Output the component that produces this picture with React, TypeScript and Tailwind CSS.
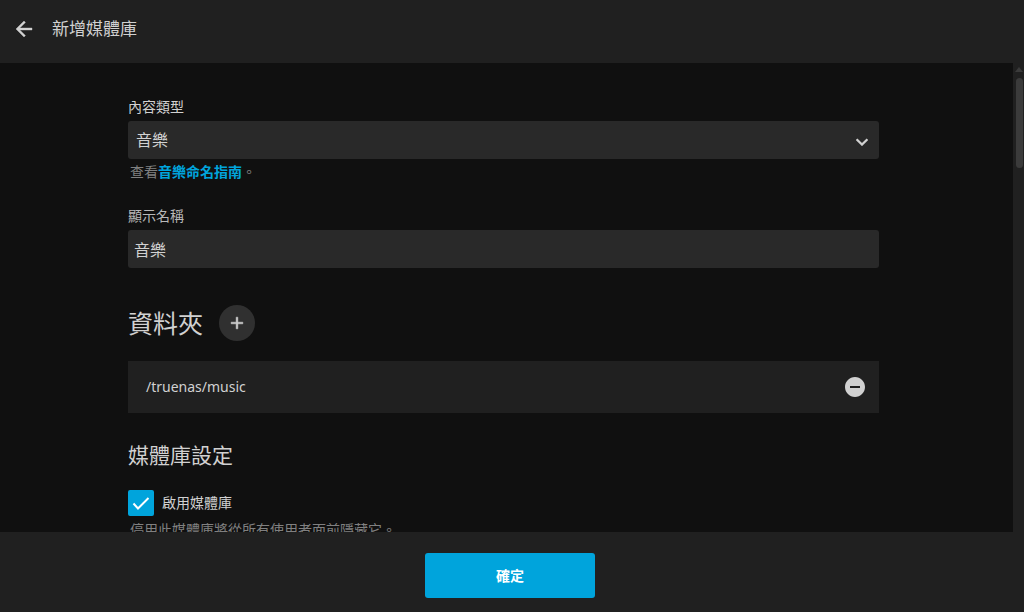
import React, { useState } from 'react';

const ArrowBackIcon: React.FC = () => (
  <svg viewBox="0 0 24 24" className="h-6 w-6" fill="currentColor" stroke="currentColor" strokeWidth="0.4" aria-hidden="true">
    <path d="M20 11H7.83l5.59-5.59L12 4l-8 8 8 8 1.41-1.41L7.83 13H20v-2z" />
  </svg>
);

const AddIcon: React.FC = () => (
  <svg viewBox="0 0 24 24" className="h-5 w-5" fill="currentColor" stroke="currentColor" strokeWidth="0.6" aria-hidden="true">
    <path d="M19 13h-6v6h-2v-6H5v-2h6V5h2v6h6v2z" />
  </svg>
);

const RemoveCircleIcon: React.FC = () => (
  <svg viewBox="0 0 24 24" className="h-6 w-6" fill="currentColor" aria-hidden="true">
    <path d="M12 2C6.48 2 2 6.48 2 12s4.48 10 10 10 10-4.48 10-10S17.52 2 12 2zm5 11H7v-2h10v2z" />
  </svg>
);

const ExpandIcon: React.FC = () => (
  <svg
    viewBox="0 0 12 8"
    className="pointer-events-none absolute top-[17px] right-[11px] h-2 w-3"
    fill="none"
    stroke="currentColor"
    strokeWidth="2.2"
    aria-hidden="true"
  >
    <path d="M0.6 1.2 6 6.6l5.4-5.4" />
  </svg>
);

const CheckIcon: React.FC = () => (
  <svg
    viewBox="0 0 26 26"
    className="pointer-events-none absolute inset-0 h-[26px] w-[26px] text-white"
    fill="none"
    stroke="currentColor"
    strokeWidth="2"
    aria-hidden="true"
  >
    <path d="M5.5 13.5 10 18.5 20.5 8" />
  </svg>
);

const ScrollTrack: React.FC = () => (
  <div className="flex w-[11px] shrink-0 flex-col items-end bg-[#202020] pt-1" aria-hidden="true">
    <svg viewBox="0 0 8 5" className="mr-px h-[5px] w-2 text-[#3b3b3b]" fill="currentColor">
      <path d="M4 0l4 5H0z" />
    </svg>
    <div className="mt-[6px] mr-px h-[90px] w-[7px] rounded-full bg-[#3b3b3b]" />
  </div>
);

const App: React.FC = () => {
  const [contentType, setContentType] = useState('music');
  const [name, setName] = useState('音樂');
  const [folders, setFolders] = useState(['/truenas/music']);
  const [enabled, setEnabled] = useState(true);

  return (
    <div className="flex h-screen flex-col bg-[#202020] font-['Noto_Sans','Noto_Sans_CJK_TC',sans-serif] text-sm text-[#d1d1d1]">
      <header className="flex shrink-0 items-center px-3 pt-[17px] pb-[22px]">
        <button type="button" aria-label="返回">
          <ArrowBackIcon />
        </button>
        <h1 className="ml-4 text-[17px] leading-6">新增媒體庫</h1>
      </header>

      <div className="flex min-h-0 flex-1">
        <main className="min-w-0 flex-1 overflow-y-auto bg-[#101010] pt-[34px] pr-[134px] pb-8 pl-32 [scrollbar-width:none]">
          <div>
            <label htmlFor="content-type" className="block leading-5">
              內容類型
            </label>
            <div className="relative mt-1">
              <select
                id="content-type"
                value={contentType}
                onChange={(e) => setContentType(e.target.value)}
                className="block h-[38px] w-full appearance-none rounded-[3px] bg-[#292929] px-2 text-base"
              >
                <option value="music">音樂</option>
                <option value="movies">電影</option>
                <option value="tvshows">節目</option>
              </select>
              <ExpandIcon />
            </div>
            <p className="mt-[3px] pl-[2px] leading-5 text-[#808080]">
              查看
              <a href="#" className="font-bold text-[#00a4dc]">
                音樂命名指南
              </a>
              。
            </p>
          </div>

          <div className="mt-6">
            <label htmlFor="display-name" className="block leading-5 text-[#b8b8b8]">
              顯示名稱
            </label>
            <input
              id="display-name"
              type="text"
              value={name}
              onChange={(e) => setName(e.target.value)}
              className="mt-1 block h-[38px] w-full rounded-[3px] bg-[#292929] px-[6px] text-base"
            />
          </div>

          <section>
            <div className="mt-[37px] flex items-center">
              <h2 className="text-[25px] leading-9">資料夾</h2>
              <button
                type="button"
                aria-label="新增"
                onClick={() => setFolders([...folders, '/truenas'])}
                className="ml-4 flex h-9 w-9 items-center justify-center rounded-full bg-[#303030]"
              >
                <AddIcon />
              </button>
            </div>
            <ul className="mt-5">
              {folders.map((folder, index) => (
                <li key={index} className="flex h-[52px] items-center justify-between bg-[#202020] pr-3 pl-[18px]">
                  <span>{folder}</span>
                  <button
                    type="button"
                    aria-label="移除"
                    onClick={() => setFolders(folders.filter((_, i) => i !== index))}
                  >
                    <RemoveCircleIcon />
                  </button>
                </li>
              ))}
            </ul>
          </section>

          <section>
            <h2 className="mt-6 text-[21px] leading-9">媒體庫設定</h2>
            <div className="mt-[17px] flex items-center">
              <span className="relative h-[26px] w-[26px]">
                <input
                  id="enable-library"
                  type="checkbox"
                  checked={enabled}
                  onChange={(e) => setEnabled(e.target.checked)}
                  className="block h-[26px] w-[26px] appearance-none rounded-[2px] border-2 border-[#808080] checked:border-[#00a4dc] checked:bg-[#00a4dc]"
                />
                {enabled && <CheckIcon />}
              </span>
              <label htmlFor="enable-library" className="pl-2 leading-5">
                啟用媒體庫
              </label>
            </div>
            <p className="mt-1 pl-[2px] leading-5 text-[#808080]">停用此媒體庫將從所有使用者面前隱藏它。</p>
          </section>
        </main>
        <ScrollTrack />
      </div>

      <footer className="flex shrink-0 justify-center pt-[21px] pr-1 pb-[14px]">
        <button type="submit" className="h-[45px] w-[170px] rounded-[3px] bg-[#00a4dc] font-bold text-white">
          確定
        </button>
      </footer>
    </div>
  );
};

export default App;
